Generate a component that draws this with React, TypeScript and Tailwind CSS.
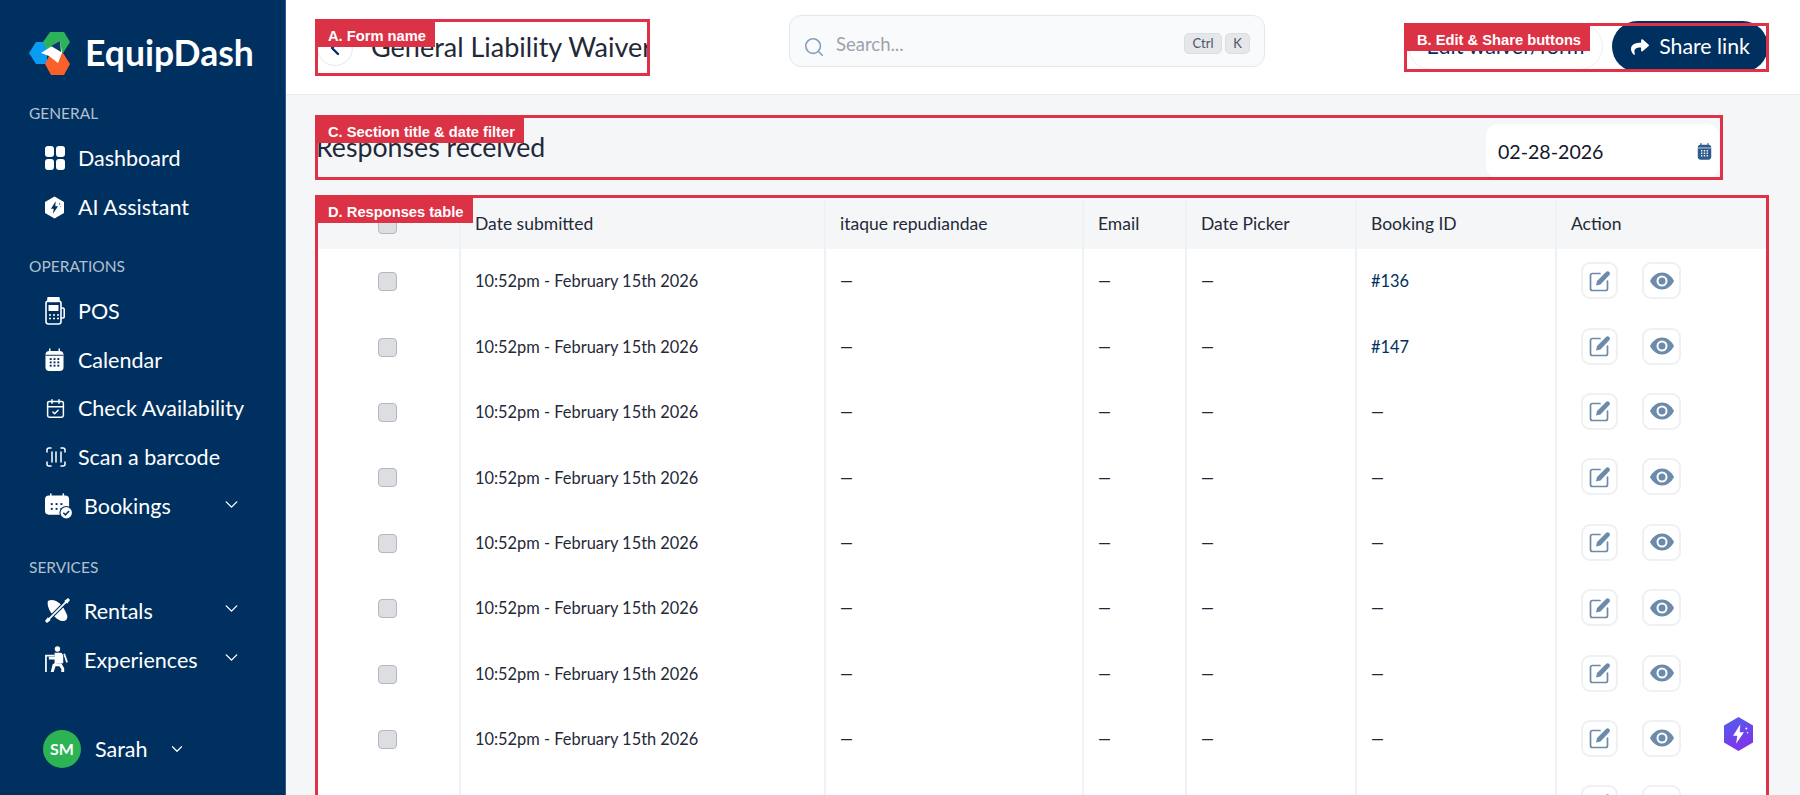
import React from "react";
import { ChevronDown, ChevronLeft, Search, ScanBarcode, CalendarCheck } from "lucide-react";
import { FaShare } from "react-icons/fa";

const Logo = () => (
  <svg viewBox="0 0 42 43" className="w-[42px] h-[43px]">
    <polygon points="0,21 7,10 18,10 18,32 7,32" fill="#0a9bf5" />
    <polygon points="14,10 21,0 35,0 41,10 34,21 20,21" fill="#2cb35a" />
    <polygon points="20,24 34,21 41,32 35,43 22,43 16,32" fill="#f9602a" />
    <polygon points="12,21 31,9 33,21 29,31 20,24" fill="#ffffff" />
    <polygon points="22,14 31,9 32,20" fill="#0d3a66" />
  </svg>
);

const DashIcon = () => (
  <svg viewBox="0 0 20 24" className="w-5 h-6" fill="#fff">
    <rect x="0" y="0" width="9" height="11" rx="3" />
    <rect x="11" y="0" width="9" height="11" rx="3" />
    <rect x="0" y="13" width="9" height="11" rx="3" />
    <rect x="11" y="13" width="9" height="11" rx="3" />
  </svg>
);

const HexBolt = ({ className, fill, bolt }: { className: string; fill: string; bolt: string }) => (
  <svg viewBox="0 0 24 28" className={className}>
    <defs>
      <linearGradient id="hexGrad" x1="0" y1="0" x2="0.4" y2="1">
        <stop offset="0%" stopColor="#4f5fee" />
        <stop offset="100%" stopColor="#7f35ea" />
      </linearGradient>
    </defs>
    <polygon points="12,0 24,7 24,21 12,28 0,21 0,7" fill={fill} />
    <polygon points="13.5,6 7.5,15.5 11,15.5 10,22 16.5,12.5 13,12.5" fill={bolt} />
    <circle cx="18.5" cy="9.5" r="0.8" fill={bolt} />
    <circle cx="19.5" cy="13" r="0.6" fill={bolt} />
  </svg>
);

const PosIcon = () => (
  <svg viewBox="0 0 20 28" className="w-5 h-7" fill="none" stroke="#fff" strokeWidth="1.6">
    <rect x="3" y="0.5" width="11" height="4" rx="1" fill="#fff" />
    <rect x="1" y="4" width="15" height="23" rx="2.5" />
    <rect x="3.5" y="8" width="10" height="6" fill="#fff" stroke="none" />
    <path d="M16 11h2a1.5 1.5 0 0 1 1.2 1.5v7a1.5 1.5 0 0 1-1.2 1.5h-2" />
    <path d="M4 18h2M8 18h2M12 18h2M4 21.5h2M8 21.5h2M12 21.5h2" strokeWidth="1.4" />
  </svg>
);

const CalFilled = ({ className, fill, dot }: { className: string; fill: string; dot: string }) => (
  <svg viewBox="0 0 20 24" className={className}>
    <path d="M5 0.5v4M15 0.5v4" stroke={fill} strokeWidth="1.6" strokeLinecap="round" />
    <rect x="0.5" y="2.5" width="19" height="21" rx="4" fill={fill} />
    <rect x="0.5" y="6.5" width="19" height="1" fill={dot} />
    {[6, 10, 14].map((x) =>
      [11, 14.5, 18].map((y) => <rect key={`${x}-${y}`} x={x - 1} y={y - 1} width="2" height="2" fill={dot} />)
    )}
  </svg>
);

const BookingsIcon = () => (
  <svg viewBox="0 0 28 26" className="w-[27px] h-[26px]">
    <path d="M6 0.5v4M19 0.5v4" stroke="#fff" strokeWidth="1.6" strokeLinecap="round" />
    <rect x="0" y="2" width="25" height="20" rx="4" fill="#fff" />
    {[6, 11, 16].map((x) =>
      [10, 15].map((y) => <rect key={`${x}-${y}`} x={x} y={y} width="2" height="2" fill="#003060" />)
    )}
    <circle cx="22" cy="20" r="6.5" fill="#fff" stroke="#003060" strokeWidth="1.2" />
    <path d="M19 20l2.2 2.2 3.8-4" fill="none" stroke="#003060" strokeWidth="1.5" />
  </svg>
);

const KayakIcon = () => (
  <svg viewBox="0 0 26 26" className="w-[25px] h-[25px]">
    <path d="M3 3c7-3 15 2 20 15 1 3-1 6-4 6C12 24 1 12 3 3z" fill="#fff" />
    <path d="M1 25L25 1" stroke="#003060" strokeWidth="4" />
    <path d="M3 23L23 3" stroke="#fff" strokeWidth="1.8" />
    <path d="M0 24l3-4 3 3-4 3zM26 2l-3 4-3-3 4-3z" fill="#fff" />
  </svg>
);

const HikerIcon = () => (
  <svg viewBox="0 0 24 28" className="w-[23px] h-[27px]">
    <circle cx="13" cy="3" r="2.8" fill="#fff" />
    <path d="M1 27V10h9" fill="none" stroke="#fff" strokeWidth="1.8" />
    <path d="M10 7h6c2 0 3 2 3 4v7h-7l-2 3v-7H4v-3h6z" fill="#fff" />
    <path d="M10 18h7l3 5v4h-3v-3l-2-3h-4l-2 6H6l2-8z" fill="#fff" />
    <path d="M20 8l3 9" stroke="#fff" strokeWidth="1.8" />
  </svg>
);

const EditIcon = () => (
  <svg viewBox="0 0 22 22" className="w-[22px] h-[22px]">
    <path d="M11 3.5H3.5A2 2 0 0 0 1.5 5.5v13a2 2 0 0 0 2 2h13a2 2 0 0 0 2-2V11" fill="none" stroke="#6c8aa9" strokeWidth="1.7" strokeLinecap="round" />
    <path d="M7 15.5l1-4.5L17 2c1-1 2.300-1 3.200 0s1 2.200 0 3.200L11.500 14.500z" fill="#6c8aa9" />
  </svg>
);

const EyeIcon = () => (
  <svg viewBox="0 0 24 18" className="w-[24px] h-[18px]">
    <path d="M0 9C3 3.500 7 0.500 12 0.500S21 3.500 24 9c-3 5.500-7 8.500-12 8.500S3 14.500 0 9z" fill="#6c8aa9" />
    <circle cx="12" cy="9" r="5.500" fill="#fff" />
    <circle cx="12" cy="9" r="3.500" fill="#6c8aa9" />
  </svg>
);

const NavItem = ({ icon, label, wide, chevron }: { icon: React.ReactNode; label: string; wide?: boolean; chevron?: boolean }) => (
  <div className="flex items-center h-[48.8px] pl-[45px] pr-[44px] text-[21.5px] text-white whitespace-nowrap">
    <div className={wide ? "w-[39px] flex items-center shrink-0" : "w-[33px] flex items-center shrink-0"}>{icon}</div>
    <span>{label}</span>
    {chevron && <ChevronDown className="ml-auto w-[21px] h-[21px] -mt-[4px] -mr-[1px]" strokeWidth={1.6} />}
  </div>
);

const SectionLabel = ({ children, className }: { children: React.ReactNode; className: string }) => (
  <div className={`pl-[29px] h-5 flex items-center text-[15.500px] text-[#b3c0ce] ${className}`}>{children}</div>
);

const Annotation = ({ label }: { label: string }) => (
  <div className="absolute inset-0 border-[3px] border-[#e03148] pointer-events-none z-10">
    <div className="absolute -top-[3px] -left-[3px] h-[28px] pt-[6px] pl-[13px] pr-[9px] flex items-center whitespace-nowrap bg-[#dc3246] text-white text-[14.700px] font-bold font-['Liberation_Sans',sans-serif]">
      {label}
    </div>
  </div>
);

const cols = "grid grid-cols-[144px_365px_258px_103px_170px_200px_1fr]";
const cell = "flex items-center pl-[14px] border-l-2 border-[#f0f1f3]";

const Checkbox = () => (
  <div className="w-[19px] h-[19px] rounded-[4px] bg-[#dcdee2] border border-[#b4b8be]" />
);

const rows = ["#136", "#147", "—", "—", "—", "—", "—", "—", "—"];

export default function App() {
  return (
    <div className="flex w-[1800px] h-[795px] overflow-hidden bg-[#f5f6f8] font-['Lato',sans-serif] text-[#1f2937]">
      <aside className="w-[286px] shrink-0 flex flex-col bg-[#003060] border-r border-[#2f5c96]">
        <div className="flex items-center gap-[14px] pl-[29px] pt-[32px]">
          <Logo />
          <span className="text-[35.500px] leading-[41px] font-bold text-white -mt-[2px]">EquipDash</span>
        </div>
        <SectionLabel className="mt-[29px]">GENERAL</SectionLabel>
        <div className="mt-[10px]">
          <NavItem icon={<DashIcon />} label="Dashboard" />
          <NavItem icon={<HexBolt className="w-[19px] h-[23px]" fill="#fff" bolt="#003060" />} label="AI Assistant" />
        </div>
        <SectionLabel className="mt-[25px]">OPERATIONS</SectionLabel>
        <div className="mt-[10px]">
          <NavItem icon={<PosIcon />} label="POS" />
          <NavItem icon={<CalFilled className="w-[19px] h-6" fill="#fff" dot="#003060" />} label="Calendar" />
          <NavItem icon={<CalendarCheck className="w-[21px] h-[23px]" color="#fff" strokeWidth={1.7} />} label="Check Availability" />
          <NavItem icon={<ScanBarcode className="w-[24px] h-[26px] -ml-[1px]" color="#fff" strokeWidth={1.5} />} label="Scan a barcode" />
          <NavItem icon={<BookingsIcon />} label="Bookings" wide chevron />
        </div>
        <SectionLabel className="mt-[27px]">SERVICES</SectionLabel>
        <div className="mt-[9px]">
          <NavItem icon={<KayakIcon />} label="Rentals" wide chevron />
          <NavItem icon={<HikerIcon />} label="Experiences" wide chevron />
        </div>
        <div className="mt-auto mb-[27px] pl-[43px] flex items-center text-white text-[21.500px]">
          <div className="w-[38px] h-[38px] rounded-full bg-[#2cb354] flex items-center justify-center text-[16px] font-bold">SM</div>
          <span className="ml-[14px]">Sarah</span>
          <ChevronDown className="ml-[20px] w-[18px] h-[18px]" strokeWidth={1.6} />
        </div>
      </aside>

      <main className="flex-1 min-w-0 flex flex-col">
        <header className="h-[95px] shrink-0 bg-white border-b border-[#e8eaed] pl-[29px] pr-[31px] flex items-start justify-between">
          <div className="relative mt-[19px] w-[335px] h-[57px] flex items-center overflow-hidden">
            <div className="w-[36px] h-[36px] rounded-full border border-[#e5e7eb] flex items-center justify-center mt-[1px] ml-[2px] shrink-0">
              <ChevronLeft className="w-6 h-6 text-[#003060]" strokeWidth={2.4} />
            </div>
            <span className="ml-[18px] text-[27px] whitespace-nowrap text-[#1f2937]">General Liability Waiver</span>
            <Annotation label="A. Form name" />
          </div>
          <div className="mt-[15px] w-[476px] h-[52px] rounded-[12px] bg-[#f9fafb] border border-[#e5e7eb] flex items-center pl-[13px] pr-[14px]">
            <Search className="w-[22px] h-[22px] text-[#86a0bb] mt-[11px]" strokeWidth={1.8} />
            <span className="ml-[11px] text-[18.500px] text-[#9ca3af] mt-[8px]">Search...</span>
            <div className="ml-auto flex gap-[3px] mt-[5px]">
              <span className="w-[38px] h-[21px] rounded-[5px] bg-[#e5e7eb] border border-[#dadde1] flex items-center justify-center text-[13px] text-[#4b5563]">Ctrl</span>
              <span className="w-[25px] h-[21px] rounded-[5px] bg-[#e5e7eb] border border-[#dadde1] flex items-center justify-center text-[13px] text-[#4b5563]">K</span>
            </div>
          </div>
          <div className="relative mt-[23px] w-[365px] h-[49px] flex">
            <div className="ml-[4px] w-[195px] h-[47px] rounded-full bg-white border border-[#eceef1] flex items-center justify-center text-[21.500px] text-[#003060]">
              Edit waiver/form
            </div>
            <div className="ml-[9px] -mt-[2px] w-[156px] h-[51px] rounded-full bg-[#003060] flex items-center justify-center gap-[9px] text-[21.300px] text-white">
              <FaShare className="w-[20px] h-[18px]" />
              <span>Share link</span>
            </div>
            <Annotation label="B. Edit & Share buttons" />
          </div>
        </header>

        <section className="relative mt-[20px] ml-[29px] w-[1408px] h-[65px] shrink-0 flex justify-between">
          <h2 className="ml-[1px] mt-[17px] text-[26.700px] leading-[30px] text-[#1f2937]">Responses received</h2>
          <div className="mt-[9px] mr-[4px] w-[233px] h-[54px] rounded-[12px] bg-white flex items-center justify-between pl-[12px] pr-[7px] text-[19.600px] text-[#111827]">
            <span className="mt-[1px]">02-28-2026</span>
            <CalFilled className="w-[15px] h-[17px]" fill="#2e5a8c" dot="#fff" />
          </div>
          <Annotation label="C. Section title & date filter" />
        </section>

        <section className="relative mt-[15px] ml-[29px] w-[1454px] shrink-0 bg-white text-[16.400px]">
          <div className={`${cols} h-[54px] pt-[5px] bg-[#f5f6f8] text-[17.500px] text-[#1f2937]`}>
            <div className="flex items-center justify-center pl-[1px]">
              <Checkbox />
            </div>
            <div className={cell}>Date submitted</div>
            <div className={cell}>itaque repudiandae</div>
            <div className={cell}>Email</div>
            <div className={cell}>Date Picker</div>
            <div className={cell}>Booking ID</div>
            <div className={cell}>Action</div>
          </div>
          {rows.map((id, i) => (
            <div key={i} className={`${cols} h-[65.4px]`}>
              <div className="flex items-center justify-center pl-[1px]">
                <Checkbox />
              </div>
              <div className={cell}>10:52pm - February 15th 2026</div>
              <div className={cell}>—</div>
              <div className={cell}>—</div>
              <div className={cell}>—</div>
              <div className={`${cell} ${id === "—" ? "" : "text-[#003060]"}`}>{id}</div>
              <div className={`${cell} gap-[24px] pl-[24px]`}>
                <div className="w-[37px] h-[37px] rounded-[9px] border-2 border-[#eff0f2] flex items-center justify-center -mt-[2px]">
                  <EditIcon />
                </div>
                <div className="w-[39px] h-[37px] rounded-[9px] border-2 border-[#eff0f2] flex items-center justify-center -mt-[2px]">
                  <EyeIcon />
                </div>
              </div>
            </div>
          ))}
          <Annotation label="D. Responses table" />
        </section>
      </main>

      <div className="fixed left-[1724px] top-[717px] z-20">
        <HexBolt className="w-[29px] h-[34px]" fill="url(#hexGrad)" bolt="#fff" />
      </div>
    </div>
  );
}
